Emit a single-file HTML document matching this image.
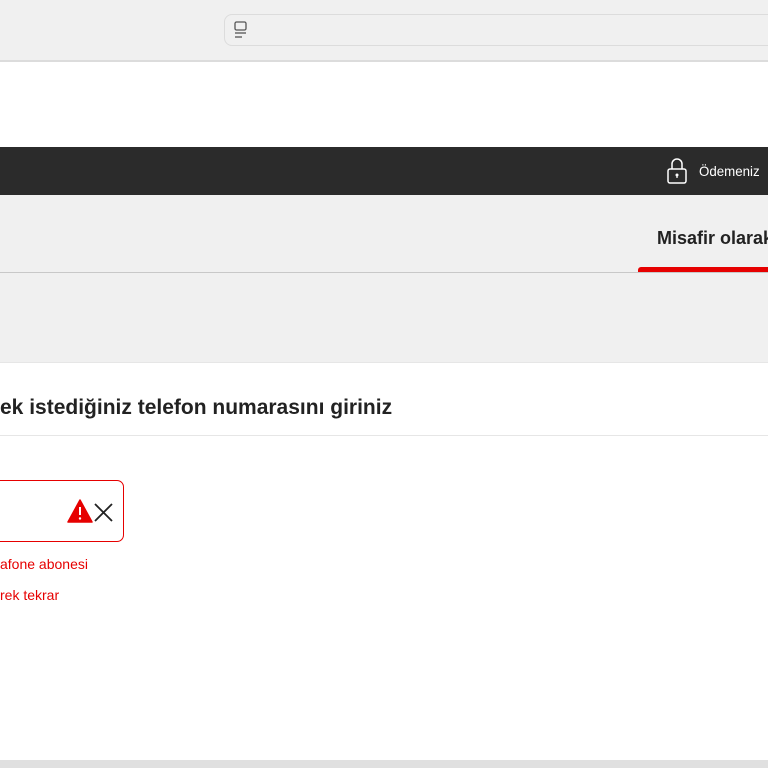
<!DOCTYPE html>
<html><head><meta charset="utf-8"><style>
body{margin:0;width:768px;height:768px;overflow:hidden;background:#fff;font-family:"Liberation Sans",sans-serif;position:relative}
div{position:absolute;box-sizing:border-box}
</style></head><body>
<div style="left:0;top:0;width:768px;height:62px;background:#f0f0f0;border-bottom:2px solid #dcdcdc"></div>
<div style="left:224px;top:14px;width:560px;height:32px;border:1px solid #dcdcdc;border-radius:8px;background:#f0f0f0"></div>
<svg style="position:absolute;left:233px;top:21px" width="16" height="18" viewBox="0 0 16 18"><rect x="2" y="1" width="11" height="8" rx="1.5" fill="none" stroke="#555" stroke-width="1.3"/><line x1="2" y1="12" x2="13" y2="12" stroke="#555" stroke-width="1.3"/><line x1="2" y1="16" x2="9" y2="16" stroke="#555" stroke-width="1.3"/></svg>
<div style="left:0;top:147px;width:768px;height:48px;background:#2b2b2b"></div>
<svg style="position:absolute;left:666px;top:158px" width="22" height="26" viewBox="0 0 22 26"><path d="M6 11V6a5 5 0 0 1 10 0v5" fill="none" stroke="#fff" stroke-width="1.5"/><rect x="2" y="11" width="18" height="14" rx="2" fill="none" stroke="#fff" stroke-width="1.5"/><circle cx="11" cy="17" r="1.5" fill="#fff"/><line x1="11" y1="17" x2="11" y2="20" stroke="#fff" stroke-width="1.3"/></svg>
<div style="left:699px;top:163px;color:#fff;font-size:14px;white-space:nowrap;transform:scaleX(0.95);transform-origin:left">Ödemeniz</div>
<div style="left:0;top:195px;width:768px;height:167px;background:#f0f0f0"></div>
<div style="left:0;top:272px;width:768px;height:1px;background:#c8c8c8"></div>
<div style="left:657px;top:228px;font-size:18px;font-weight:bold;color:#222;white-space:nowrap">Misafir olarak</div>
<div style="left:638px;top:267px;width:140px;height:5px;background:#e60000;border-radius:3px 0 0 0"></div>
<div style="left:0;top:362px;width:768px;height:1px;background:#e6e6e6"></div>
<div style="left:0;top:396px;font-size:21px;font-weight:bold;color:#222;white-space:nowrap">ek istediğiniz telefon numarasını giriniz</div>
<div style="left:0;top:435px;width:768px;height:1px;background:#e6e6e6"></div>
<div style="left:-20px;top:480px;width:144px;height:62px;border:1px solid #e60000;border-radius:7px"></div>
<svg style="position:absolute;left:67px;top:499px" width="26" height="24" viewBox="0 0 26 24"><path d="M13 1L25 23H1Z" fill="#e60000" stroke="#e60000" stroke-linejoin="round" stroke-width="1.5"/><line x1="13" y1="8" x2="13" y2="16" stroke="#fff" stroke-width="2"/><circle cx="13" cy="19.5" r="1.2" fill="#fff"/></svg>
<svg style="position:absolute;left:93px;top:502px" width="21" height="21" viewBox="0 0 21 21"><path d="M2 2L19 19M19 2L2 19" stroke="#222" stroke-width="1.8"/></svg>
<div style="left:0;top:556px;font-size:14px;color:#e60000;white-space:nowrap">afone abonesi</div>
<div style="left:0;top:587px;font-size:14px;color:#e60000;white-space:nowrap">rek tekrar</div>
<div style="left:0;top:760px;width:768px;height:8px;background:#e0e0e0"></div>
</body></html>
